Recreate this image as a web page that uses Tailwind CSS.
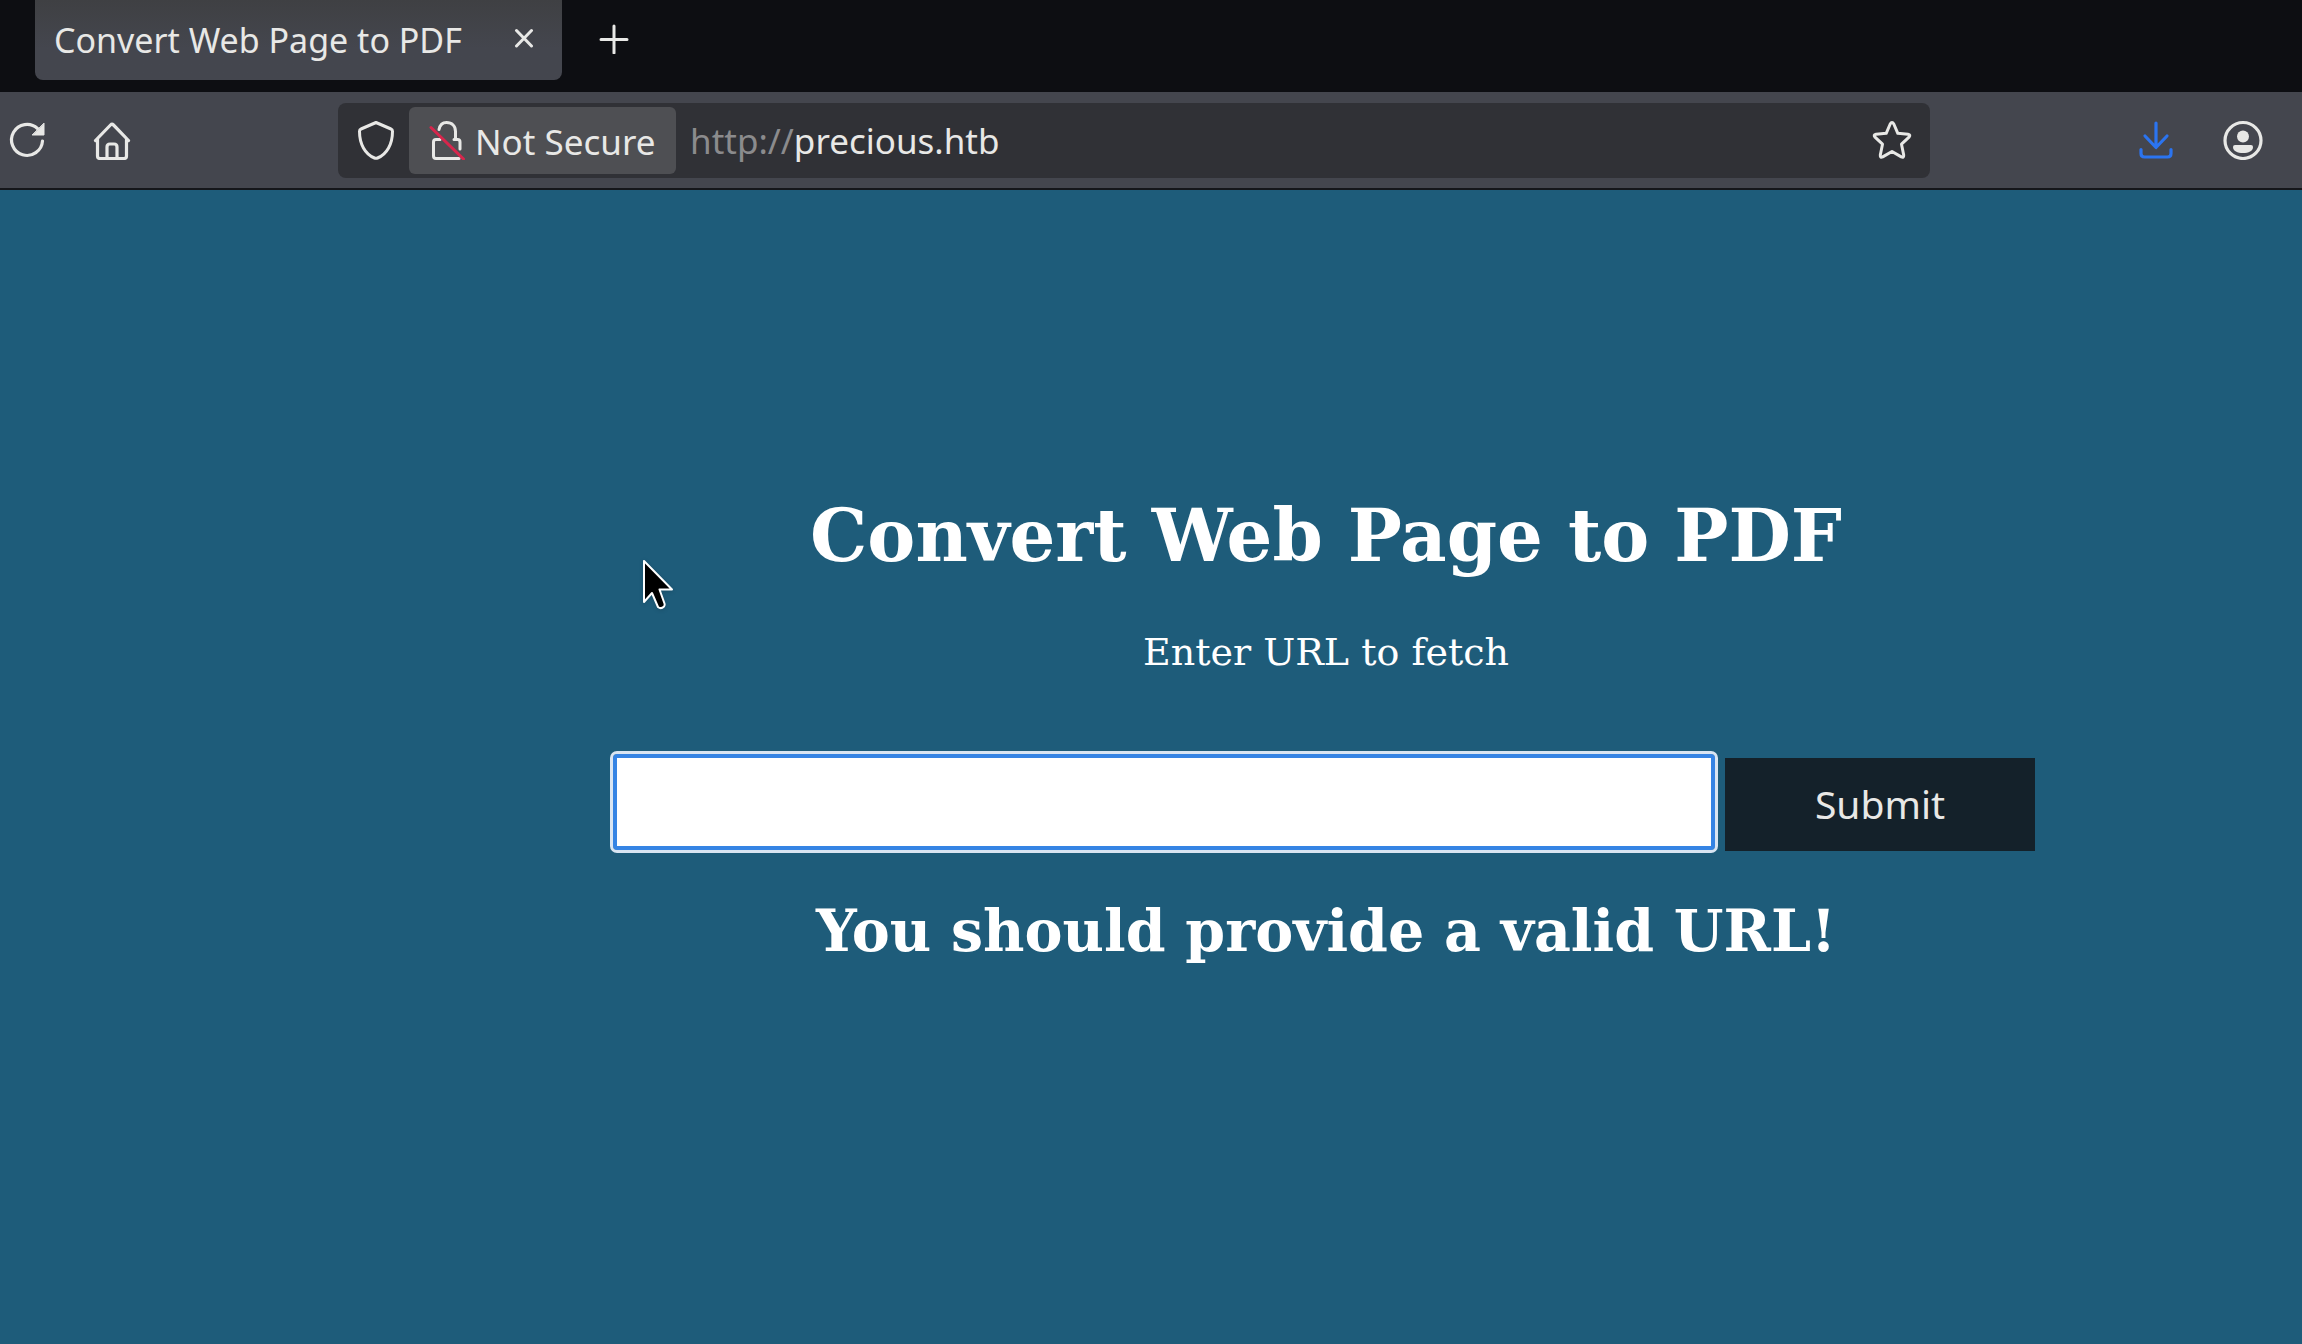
<!DOCTYPE html>
<html lang="en">
<head>
    <meta charset="UTF-8">
    <meta name="viewport" content="width=device-width, initial-scale=1.0">
    <title>Convert Web Page to PDF</title>
    <script src="https://cdn.jsdelivr.net/npm/@tailwindcss/browser@4"></script>
</head>
<body class="min-h-screen flex flex-col bg-[#1e5c7a] font-['Noto_Sans',sans-serif] text-[#e8e8e6]">
    <!-- tab strip -->
    <div class="flex items-start h-[92px] pl-[35px] bg-[#0d0e12]">
        <div class="flex items-center justify-between w-[527px] h-20 pl-[19px] pr-[28px] rounded-b-lg bg-linear-to-b from-[#3f4043] to-[#44464e] to-60%">
            <span class="text-[34px] leading-[80px]">Convert Web Page to PDF</span>
            <button class="pb-1" aria-label="Close tab">
                <svg class="size-5" viewBox="0 0 20 20" fill="none" stroke="currentColor" stroke-width="3" stroke-linecap="round"><path d="M2.500 2.500l15 15.500M17.500 2.500l-15 15.500"/></svg>
            </button>
        </div>
        <button class="ml-[37px] mt-6" aria-label="New tab">
            <svg class="size-[30px]" viewBox="0 0 30 30" fill="none" stroke="currentColor" stroke-width="3" stroke-linecap="round"><path d="M15 2v27M2 15.500h26"/></svg>
        </button>
    </div>

    <!-- toolbar -->
    <div class="flex items-center h-[98px] pl-[7px] pr-[39px] bg-[#44464e] border-b-2 border-[#15161a]">
        <button aria-label="Reload">
            <svg class="size-10" viewBox="0 0 40 40" fill="none" stroke="currentColor" stroke-width="3.200" stroke-linecap="round"><path d="M35.500 21A15.500 15.500 0 1 1 30.500 8.500"/><path d="M37 3.500v11.500h-11.500z" fill="currentColor" stroke-width="1" stroke-linejoin="round"/></svg>
        </button>
        <button class="ml-[45px]" aria-label="Home">
            <svg class="size-10" viewBox="0 0 40 40" fill="none" stroke="currentColor" stroke-width="3.200" stroke-linecap="round" stroke-linejoin="round"><path d="M3.500 20.500L18.500 5q1.500-1.500 3 0L36.500 20.500M5.500 19v17q0 2.500 2.500 2.500h24q2.500 0 2.500-2.500V19"/><path d="M15 38V27q0-3 3-3h4q3 0 3 3v11"/></svg>
        </button>

        <div class="flex flex-1 items-center h-[75px] mx-[206px] px-[18px] rounded-lg bg-[#303136]">
            <button aria-label="Tracking protection">
                <svg class="size-10" viewBox="0 0 40 40" fill="none" stroke="currentColor" stroke-width="3" stroke-linejoin="round"><path d="M20 2.500L35 9q1.500.6 1.500 2.200C36.500 24 31 34 21.500 38q-1.500.6-3 0C9 34 3.500 24 3.500 11.200Q3.500 9.600 5 9z"/></svg>
            </button>
            <button class="flex items-center gap-2 w-[267px] h-[67px] ml-[13px] pl-[18px] rounded-md bg-[#4e4f53]">
                <svg class="size-10" viewBox="0 0 40 40" fill="none" stroke="currentColor" stroke-width="3" stroke-linecap="round" stroke-linejoin="round"><path d="M12 9.500C13 4.500 16 2.500 19.500 2.500c5.500 0 9 3.500 9 9V19M27 19.500h3.500q2.500 0 2.500 2.500v7M9 19.500Q6.500 19.500 6.500 22v14q0 2.500 2.500 2.500h23M9 19.500h4"/><path d="M4 7.500L36.500 39" stroke="#d7264c"/></svg>
                <span class="pt-0.5 text-[35px] leading-[65px]">Not Secure</span>
            </button>
            <label for="url" class="ml-[14px] pt-0.5 text-[35px] text-[#8b8b8d]">http://</label>
            <input type="text" id="url" value="precious.htb" class="flex-1 min-w-0 pt-0.5 text-[35px] outline-none">
            <button aria-label="Bookmark this page">
                <svg class="size-10" viewBox="0 0 40 40" fill="none" stroke="currentColor" stroke-width="3" stroke-linejoin="round"><path d="M18.200 4q1.800-3 3.600 0l4 9.300 10.200 1q3 .6 1 2.900l-7.500 7 2.200 10.800q.2 3-2.400 1.900L20 31.500l-9.300 5.400q-2.600 1.100-2.400-1.900l2.200-10.800-7.500-7q-2-2.300 1-2.900l10.200-1z"/></svg>
            </button>
        </div>

        <button aria-label="Downloads">
            <svg class="size-10" viewBox="0 0 40 40" fill="none" stroke="#2b74f0" stroke-width="3.200" stroke-linecap="round" stroke-linejoin="round"><path d="M20 3v24M9 16l11 11.500L31 16M5 29.500v4q0 3.500 3.500 3.500h23q3.500 0 3.500-3.500v-4"/></svg>
        </button>
        <button class="ml-[47px]" aria-label="Account">
            <svg class="size-10" viewBox="0 0 40 40" fill="currentColor"><circle cx="20" cy="20.500" r="18" fill="none" stroke="currentColor" stroke-width="3.200"/><circle cx="20" cy="16.500" r="6"/><path d="M12 25h16q2 0 2 2c0 4-4.500 6-10 6s-10-2-10-6q0-2 2-2z"/></svg>
        </button>
    </div>

    <!-- page content -->
    <main class="relative flex flex-col items-center pl-[350px] pt-[304px] font-['DejaVu_Serif',serif] text-white">
        <h1 class="text-[72px] leading-[84px] font-bold">Convert Web Page to PDF</h1>
        <label for="target" class="mt-[50px] text-[38px] leading-[48px]">Enter URL to fetch</label>
        <form action="#" class="flex items-center gap-[10px] mt-[76px] pr-1">
            <input type="text" name="url" id="target" class="w-[1102px] h-24 rounded-sm border-4 border-[#3584e4] bg-white outline-3 outline-[#d9e5f2] text-black text-[40px] px-4">
            <button class="w-[310px] h-[93px] mt-1.5 bg-[#14212a] font-['Noto_Sans',sans-serif] text-[39px] text-[#e8e8e6]">Submit</button>
        </form>
        <h2 class="mt-[46px] text-[57px] leading-[68px] font-bold">You should provide a valid URL!</h2>

        <!-- mouse pointer -->
        <svg class="absolute left-[642px] top-[368px] w-9 h-14 drop-shadow-sm" viewBox="0 0 36 56" fill="#000" stroke="#fff" stroke-width="2" stroke-linejoin="round"><path d="M2 3v41l8-9 6 14q3 2.500 6-.5 1-1.500.5-3L17.500 31.500H30z"/></svg>
    </main>
</body>
</html>
